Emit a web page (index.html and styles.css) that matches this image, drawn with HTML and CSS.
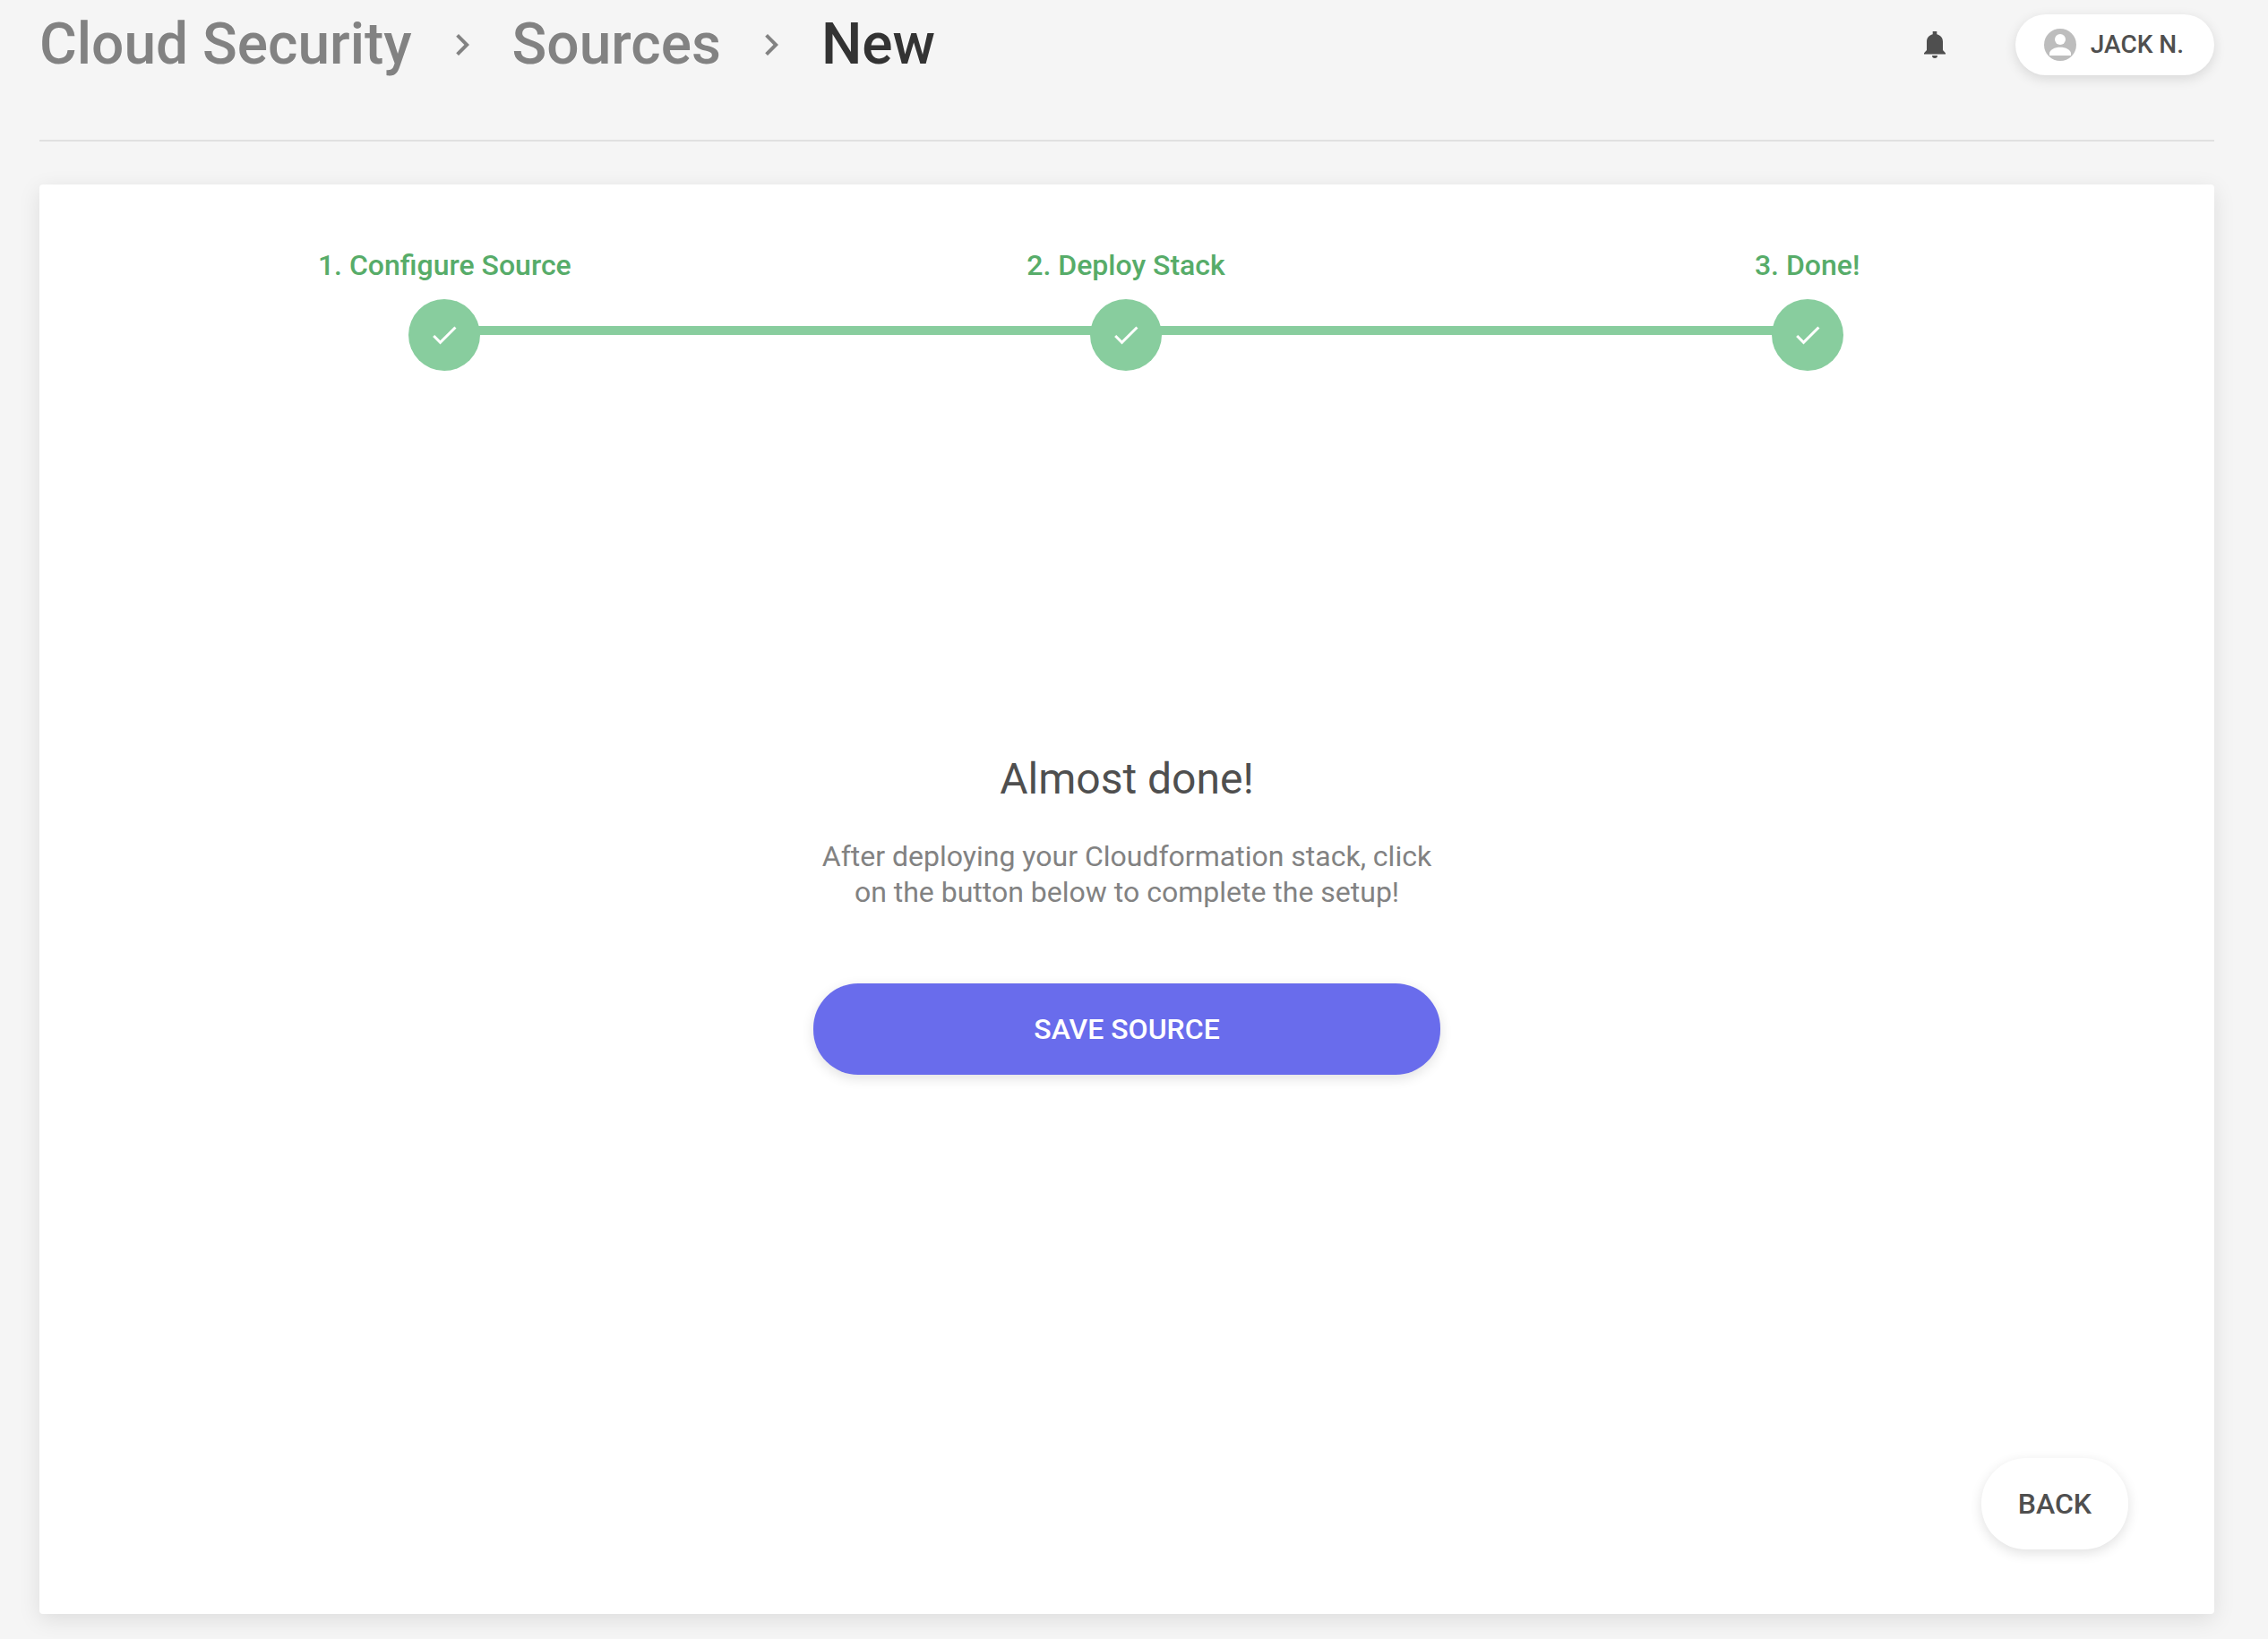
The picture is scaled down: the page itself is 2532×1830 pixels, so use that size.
FILE: index.html
```html
<!DOCTYPE html>
<html lang="en">
<head>
  <meta charset="utf-8">
  <meta name="viewport" content="width=device-width, initial-scale=1">
  <title>New Source</title>
  <link rel="stylesheet" href="styles.css">
</head>
<body>
  <div class="page">
    <header class="header">
      <nav class="breadcrumbs" aria-label="Breadcrumb">
        <a class="crumb" href="#">Cloud Security</a>
        <svg class="chevron" viewBox="0 0 24 24" aria-hidden="true"><path d="M10 6 8.6 7.4l4.6 4.6-4.6 4.6L10 18l6-6z"/></svg>
        <a class="crumb" href="#">Sources</a>
        <svg class="chevron" viewBox="0 0 24 24" aria-hidden="true"><path d="M10 6 8.6 7.4l4.6 4.6-4.6 4.6L10 18l6-6z"/></svg>
        <a class="crumb crumb-current" href="#" aria-current="page">New</a>
      </nav>
      <div class="actions">
        <button class="icon-button" type="button" aria-label="Notifications">
          <svg class="bell" viewBox="0 0 24 30" aria-hidden="true"><path d="M9.700 0h4.600v3.300C18.500 4.300 21 7.500 21 11.500V21l3 3.300V25.500H0v-1.200L3 21V11.500C3 7.500 5.500 4.300 9.700 3.300zM9 27h6a3 3 0 0 1-6 0z"/></svg>
        </button>
        <button class="button user-button" type="button">
          <svg class="avatar" viewBox="0 0 18 18" aria-hidden="true"><circle class="avatar-disc" cx="9" cy="9" r="9"/><circle class="avatar-figure" cx="9" cy="6" r="3"/><path class="avatar-figure" d="M3 15v-1c0-2.300 3-3.600 6-3.600s6 1.300 6 3.600v1z"/></svg>
          <span>JACK N.</span>
        </button>
      </div>
    </header>

    <main class="card">
      <ol class="stepper">
        <li class="step">
          <span class="step-label">1. Configure Source</span>
          <span class="step-mark"><svg class="check" viewBox="0 0 24 24" aria-hidden="true"><path d="M9 16.170 4.830 12l-1.420 1.410L9 19 21 7l-1.410-1.410z"/></svg></span>
        </li>
        <li class="step">
          <span class="step-label">2. Deploy Stack</span>
          <span class="step-mark"><svg class="check" viewBox="0 0 24 24" aria-hidden="true"><path d="M9 16.170 4.830 12l-1.420 1.410L9 19 21 7l-1.410-1.410z"/></svg></span>
        </li>
        <li class="step">
          <span class="step-label">3. Done!</span>
          <span class="step-mark"><svg class="check" viewBox="0 0 24 24" aria-hidden="true"><path d="M9 16.170 4.830 12l-1.420 1.410L9 19 21 7l-1.410-1.410z"/></svg></span>
        </li>
      </ol>

      <section class="panel">
        <h1 class="title">Almost done!</h1>
        <p class="message">After deploying your Cloudformation stack, click on the button below to complete the setup!</p>
        <button class="button save-button" type="button">SAVE SOURCE</button>
      </section>

      <footer class="card-footer">
        <button class="button back-button" type="button">BACK</button>
      </footer>
    </main>
  </div>
</body>
</html>
```
FILE: styles.css
```css
* {
  box-sizing: border-box;
}

body {
  margin: 0;
  background: #f5f5f5;
  color: #4f4f4f;
  font-family: Roboto, "Liberation Sans", sans-serif;
  font-size: 32px;
  line-height: 40px;
}

.page {
  display: flex;
  flex-direction: column;
  min-height: 100vh;
  padding: 0 60px 28px 44px;
}

/* Header */

.header {
  display: flex;
  align-items: center;
  justify-content: space-between;
  padding: 10px 0 66px;
  border-bottom: 2px solid #e0e0e0;
}

.breadcrumbs {
  display: flex;
  align-items: center;
  gap: 32px;
}

.crumb {
  color: #828282;
  font-size: 64px;
  font-weight: 500;
  line-height: 80px;
  text-decoration: none;
}

.crumb-current {
  color: #333;
}

.chevron {
  width: 48px;
  height: 48px;
  fill: #828282;
}

.actions {
  display: flex;
  align-items: center;
  gap: 54px;
}

.icon-button {
  display: flex;
  padding: 24px;
  border: 0;
  background: none;
}

.bell {
  width: 24px;
  height: 30px;
  fill: #4f4f4f;
}

.button {
  border: 0;
  border-radius: 50px;
  background: #fff;
  box-shadow: 0 4px 14px rgba(0, 0, 0, 0.12);
  color: #4f4f4f;
  font-family: inherit;
  font-size: 32px;
  font-weight: 500;
  line-height: 40px;
}

.user-button {
  display: flex;
  align-items: center;
  gap: 16px;
  padding: 14px 34px 14px 32px;
  font-size: 28px;
}

.avatar {
  width: 36px;
  height: 36px;
}

.avatar-disc {
  fill: #bdbdbd;
}

.avatar-figure {
  fill: #fff;
}

/* Card */

.card {
  display: flex;
  flex: 1;
  flex-direction: column;
  margin-top: 48px;
  padding: 70px 72px 72px;
  border-radius: 4px;
  background: #fff;
  box-shadow: 0 6px 24px rgba(0, 0, 0, 0.1);
}

.stepper {
  display: grid;
  grid-template-columns: repeat(3, 1fr);
  margin: 0;
  padding: 0 2px 0 0;
  list-style: none;
}

.step {
  position: relative;
  display: flex;
  flex-direction: column;
  align-items: center;
  gap: 18px;
}

.step-label {
  color: #57ac69;
  font-weight: 500;
}

.step-mark {
  display: flex;
  align-items: center;
  justify-content: center;
  width: 80px;
  height: 80px;
  border-radius: 50%;
  background: #88cd9e;
}

/* Bar that joins a step's mark to the next one */
.step:not(:last-child)::after {
  content: "";
  position: absolute;
  bottom: 40px;
  left: 50%;
  width: 100%;
  height: 10px;
  background: #88cd9e;
}

.check {
  position: relative;
  z-index: 1;
  width: 36px;
  height: 36px;
  fill: #fff;
}

.panel {
  display: flex;
  flex: 1;
  flex-direction: column;
  align-items: center;
  justify-content: center;
  padding-bottom: 2px;
  text-align: center;
}

.title {
  margin: 0;
  font-size: 48px;
  font-weight: 400;
  line-height: 60px;
}

.message {
  max-width: 700px;
  margin: 36px 0 82px;
  color: #828282;
}

.save-button {
  width: 700px;
  max-width: 100%;
  padding: 31px 40px;
  background: #696cec;
  color: #fff;
}

.card-footer {
  display: flex;
  justify-content: flex-end;
  padding-right: 24px;
}

.back-button {
  padding: 31px 41px;
}
```
